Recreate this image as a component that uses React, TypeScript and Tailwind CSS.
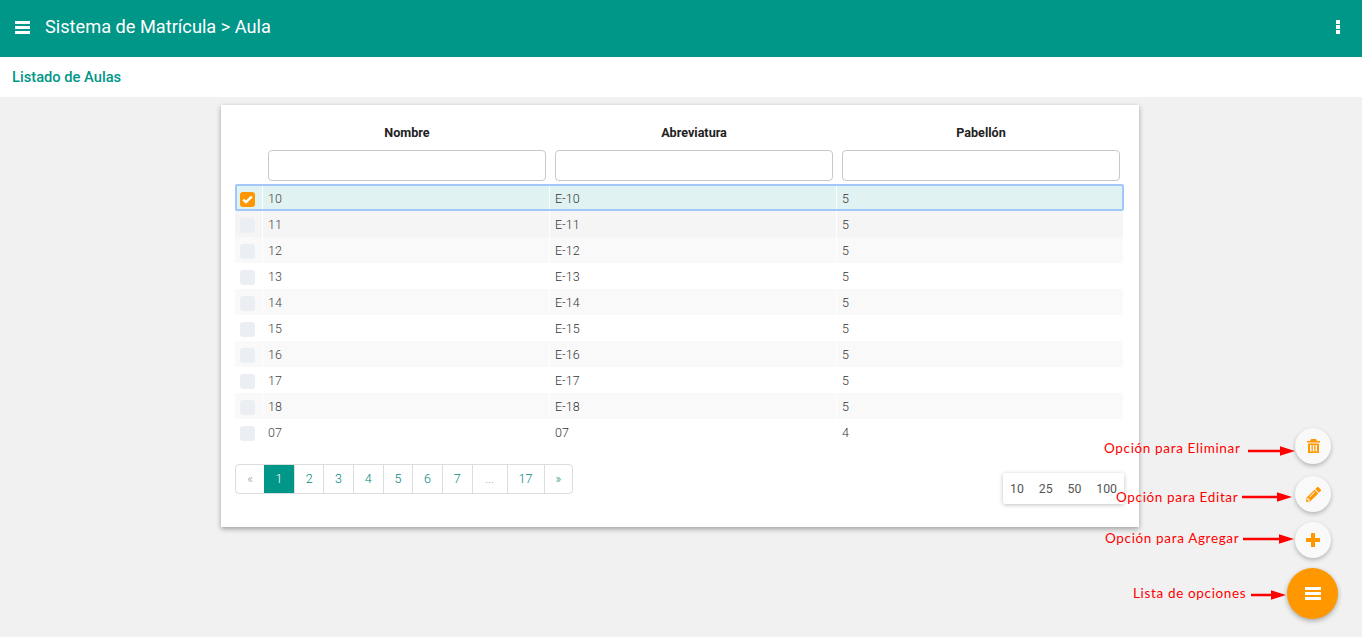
import { FaPencilAlt } from "react-icons/fa";

const rows = [
  ["10", "E-10", "5"],
  ["11", "E-11", "5"],
  ["12", "E-12", "5"],
  ["13", "E-13", "5"],
  ["14", "E-14", "5"],
  ["15", "E-15", "5"],
  ["16", "E-16", "5"],
  ["17", "E-17", "5"],
  ["18", "E-18", "5"],
  ["07", "07", "4"],
];

const rowBg = ["bg-[#e0f2f1]", "bg-[#f5f5f5]", "bg-[#f9f9f9]", "bg-white", "bg-[#f9f9f9]", "bg-white", "bg-[#f9f9f9]", "bg-white", "bg-[#f9f9f9]", "bg-white"];

const pages = [
  { t: "«", w: "w-[28px]", c: "text-[#999]" },
  { t: "1", w: "w-[30px]", c: "bg-[#009688] text-white !border-l-0" },
  { t: "2", w: "w-[29.5px]", c: "text-[#00897b]" },
  { t: "3", w: "w-[29.5px]", c: "text-[#00897b]" },
  { t: "4", w: "w-[30px]", c: "text-[#00897b]" },
  { t: "5", w: "w-[29.5px]", c: "text-[#00897b]" },
  { t: "6", w: "w-[29.5px]", c: "text-[#00897b]" },
  { t: "7", w: "w-[30px]", c: "text-[#00897b]" },
  { t: "...", w: "w-[35px]", c: "text-[#999]" },
  { t: "17", w: "w-[37px]", c: "text-[#00897b]" },
  { t: "»", w: "w-[28.5px]", c: "text-[#00897b]" },
];

function Bars({ w, h, className }: { w: number; h: number; className?: string }) {
  return (
    <svg className={className} width={w} height={h} viewBox="0 0 16 13" preserveAspectRatio="none" fill="currentColor">
      <rect x="0" y="0" width="16" height="3" />
      <rect x="0" y="5" width="16" height="3" />
      <rect x="0" y="10" width="16" height="3" />
    </svg>
  );
}

function Arrow({ x, y, w }: { x: string; y: string; w: number }) {
  return (
    <svg className={`absolute ${x} ${y}`} width={w} height="12" viewBox={`0 0 ${w} 12`}>
      <path d={`M0 4.7 L${w - 15} 4.7 L${w - 15} 1.2 L${w} 6 L${w - 15} 10.8 L${w - 15} 7.3 L0 7.3 Z`} fill="#ff0000" />
    </svg>
  );
}

function Note({ x, y, text }: { x: string; y: string; text: string }) {
  return (
    <span className={`absolute ${x} ${y} whitespace-nowrap font-['Lato',sans-serif] text-[13.5px] leading-[18px] tracking-[0.65px] text-[#ff0000]`}>
      {text}
    </span>
  );
}

export default function App() {
  return (
    <div className="relative h-[637px] w-[1362px] overflow-hidden bg-[#f1f1f1] font-['Roboto',sans-serif]">
      <header className="flex h-[57px] items-center justify-between bg-[#009688] pl-[15px] pr-[22px] text-white">
        <div className="flex items-center gap-[15px]">
          <Bars w={15} h={13} className="mb-[3px]" />
          <h1 className="mb-[3px] text-[18.2px] font-normal leading-[24px]">Sistema de Matrícula &gt; Aula</h1>
        </div>
        <div className="mb-[3px] flex flex-col gap-[1px]">
          <span className="h-[4px] w-[4px] bg-white" />
          <span className="h-[4px] w-[4px] bg-white" />
          <span className="h-[4px] w-[4px] bg-white" />
        </div>
      </header>

      <div className="flex h-[40px] items-center bg-white pl-[12px] pt-[1px]">
        <h2 className="text-[14.7px] font-medium text-[#009688]">Listado de Aulas</h2>
      </div>

      <main className="ml-[221px] mt-[8px] h-[422px] w-[918px] bg-white px-[14px] pt-[20px] shadow-[0_2px_5px_rgba(0,0,0,0.35)]">
        <div className="grid h-[16px] grid-cols-[28px_287px_287px_286px] text-center text-[12.6px] font-bold leading-[16px] text-[#222]">
          <div />
          <div className="pl-[1px]">Nombre</div>
          <div className="pl-[1px]">Abreviatura</div>
          <div className="pl-[2px]">Pabellón</div>
        </div>

        <div className="mt-[9px] grid h-[31px] grid-cols-[28px_287px_287px_286px]">
          <div />
          {[0, 1, 2].map((i) => (
            <div key={i} className="pl-[5px] pr-[3px]">
              <input className="block h-[31px] w-[278px] rounded-[4px] border border-[#c8c8c8] bg-white" />
            </div>
          ))}
        </div>

        <div className="mt-[4px] flex w-[888px] flex-col">
          {rows.map((r, i) => (
            <div key={r[0]} className={`relative grid h-[26px] grid-cols-[27px_1px_286px_1px_286px_1px_286px] text-[12.5px] font-light leading-[27px] ${i === 9 ? "" : "border-b border-white"}`}>
              <div className={`flex items-center justify-center pr-[2px] pt-[2px] ${rowBg[i]}`}>
                {i === 0 ? (
                  <span className="relative z-10 flex h-[15px] w-[15px] items-center justify-center rounded-[3px] bg-[#ff9800]">
                    <svg width="11" height="9" viewBox="0 0 11 9">
                      <path d="M1.2 4.6 L4 7.2 L9.8 1.6" fill="none" stroke="#fff" strokeWidth="2.4" />
                    </svg>
                  </span>
                ) : (
                  <span className="h-[15px] w-[15px] rounded-[3px] bg-[#ebeef2]" />
                )}
              </div>
              <div className="bg-white" />
              <div className={`pl-[5px] text-[#444] ${rowBg[i]}`}>{r[0]}</div>
              <div className="bg-white" />
              <div className={`pl-[5px] text-[#333] ${rowBg[i]}`}>{r[1]}</div>
              <div className="bg-white" />
              <div className={`pl-[5px] text-[#333] ${rowBg[i]}`}>{r[2]}</div>
              {i === 0 && <div className="pointer-events-none absolute -bottom-[1px] -top-[1px] left-0 -right-[1px] z-10 rounded-[2px] border-2 border-[#a3c6fb]" />}
            </div>
          ))}
        </div>

        <div className="mt-[19px] flex h-[30px] w-[338px]">
          <div className="flex h-[30px] overflow-hidden rounded-[4px] border border-[#ddd] bg-white">
            {pages.map((p, i) => (
              <span key={i} className={`flex items-center justify-center border-l border-[#ddd] text-[12.5px] font-light first:border-l-0 ${p.w} ${p.c}`}>
                {p.t}
              </span>
            ))}
          </div>
        </div>
      </main>

      <div className="absolute left-[1003px] top-[473px] flex h-[31px] w-[121px] items-center justify-between rounded-[2px] bg-white pl-[7px] pr-[7px] pt-[1px] text-[12.3px] text-[#555] shadow-[0_1px_4px_rgba(0,0,0,0.25)]">
        <span>10</span>
        <span>25</span>
        <span>50</span>
        <span>100</span>
      </div>

      <Note x="left-[1104px]" y="top-[439px]" text="Opción para Eliminar" />
      <Note x="left-[1116px]" y="top-[488px]" text="Opción para Editar" />
      <Note x="left-[1105px]" y="top-[529px]" text="Opción para Agregar" />
      <Note x="left-[1133px]" y="top-[584px]" text="Lista de opciones" />

      <Arrow x="left-[1248px]" y="top-[445px]" w={47} />
      <Arrow x="left-[1242px]" y="top-[491px]" w={50} />
      <Arrow x="left-[1243px]" y="top-[533px]" w={51} />
      <Arrow x="left-[1251px]" y="top-[589px]" w={35} />

      <button className="absolute left-[1295px] top-[428px] flex h-[36px] w-[36px] items-center justify-center rounded-full bg-[#f9f9f9] text-[#ff9800] shadow-[0_2px_4px_rgba(0,0,0,0.25)]">
        <svg width="13" height="14" viewBox="0 0 13 14" fill="currentColor">
          <path d="M4 0 H9 L10 2 H13 V3.5 H0 V2 H3 Z" />
          <path d="M1 4.5 H12 V14 H1 Z M3 6 V12.5 H4.5 V6 Z M5.8 6 V12.5 H7.2 V6 Z M8.5 6 V12.5 H10 V6 Z" fillRule="evenodd" />
        </svg>
      </button>
      <button className="absolute left-[1295px] top-[476px] flex h-[36px] w-[36px] items-center justify-center rounded-full bg-[#f9f9f9] text-[#ff9800] shadow-[0_2px_4px_rgba(0,0,0,0.25)]">
        <FaPencilAlt className="h-[15px] w-[15px]" />
      </button>
      <button className="absolute left-[1295px] top-[522px] flex h-[36px] w-[36px] items-center justify-center rounded-full bg-[#f9f9f9] text-[#ff9800] shadow-[0_2px_4px_rgba(0,0,0,0.25)]">
        <svg width="14" height="14" viewBox="0 0 14 14" fill="currentColor">
          <rect x="0" y="5" width="14" height="4" rx="0.5" />
          <rect x="5" y="0" width="4" height="14" rx="0.5" />
        </svg>
      </button>
      <button className="absolute left-[1287px] top-[568px] flex h-[51px] w-[51px] items-center justify-center rounded-full bg-[#ff9800] text-white shadow-[0_2px_5px_rgba(0,0,0,0.3)]">
        <Bars w={16} h={13} />
      </button>
    </div>
  );
}
